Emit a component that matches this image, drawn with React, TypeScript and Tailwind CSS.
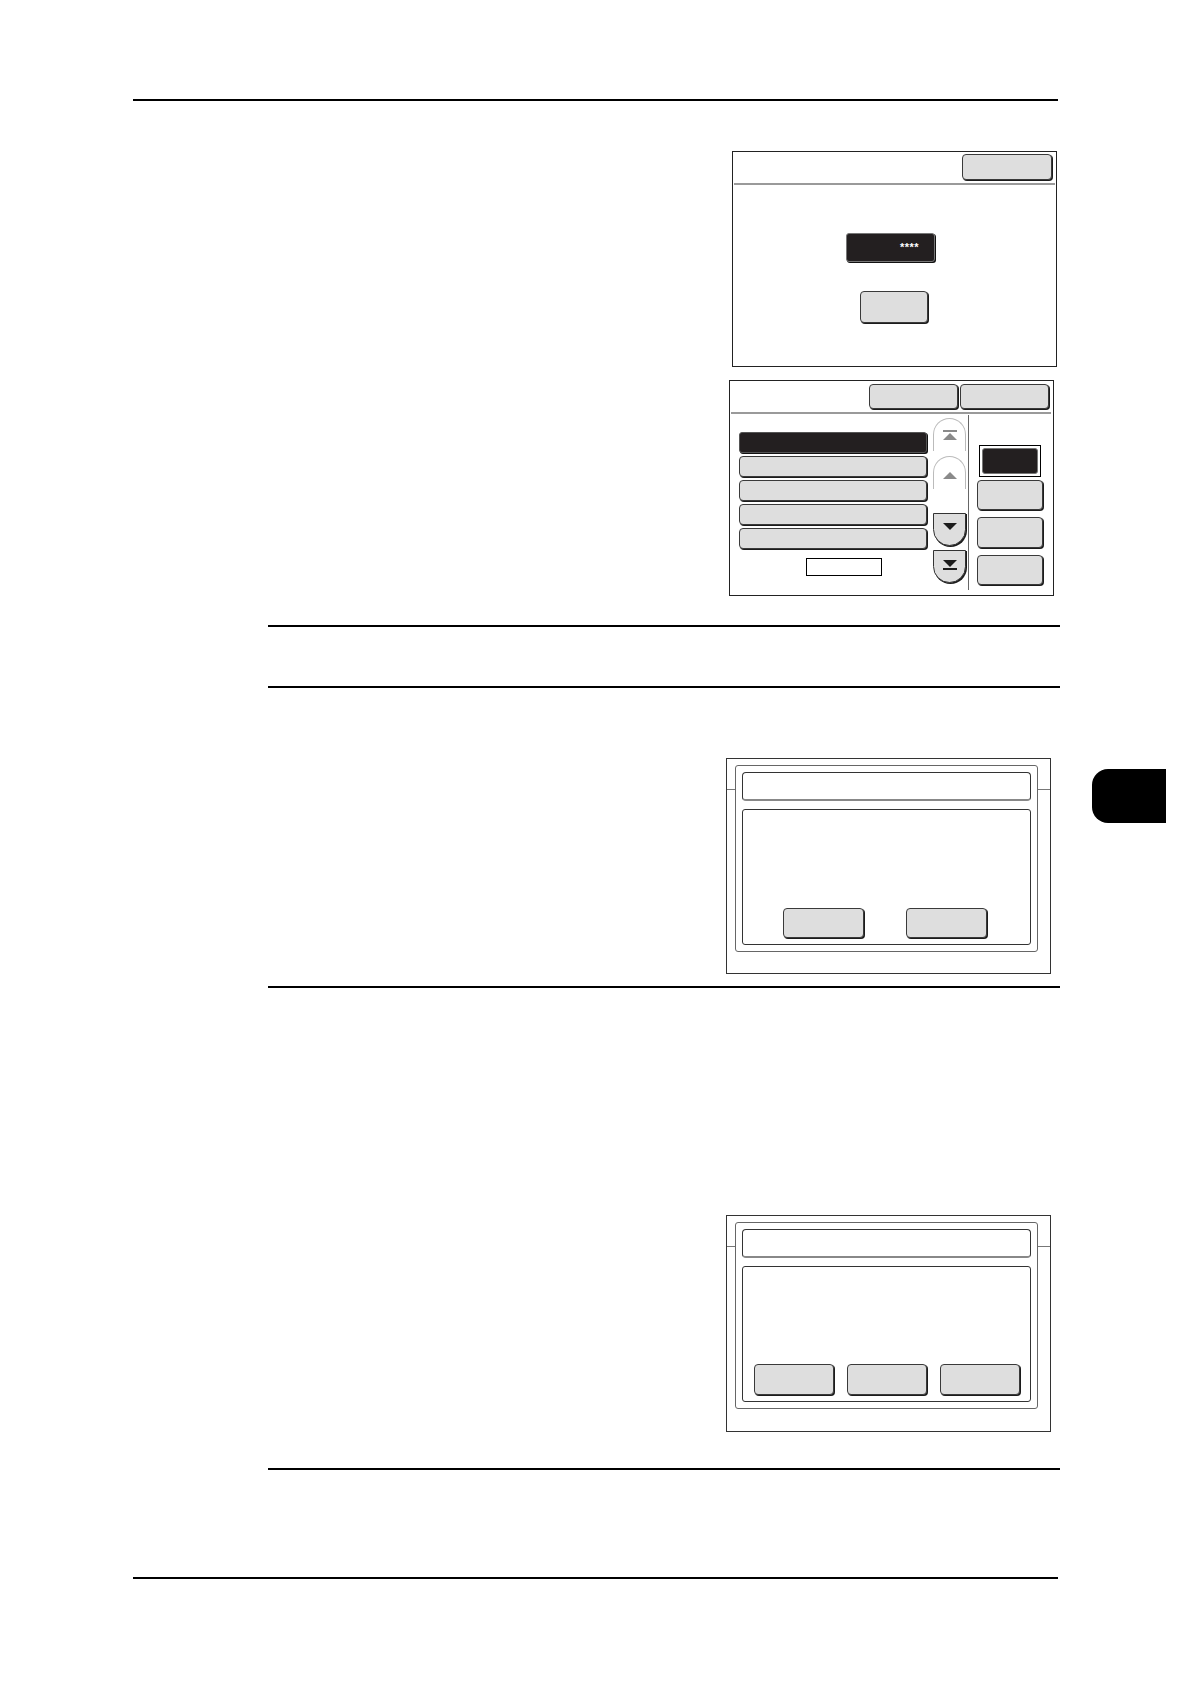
import React from "react";

// shared looks for the touch-panel style keys
const KEY = "rounded-[4px] border border-[#3a3a3a] bg-[#dedede] shadow-[1px_1px_0_#1c1c1c]";
const DARK_KEY = "rounded-[3px] border border-[#555] bg-[#231f20] shadow-[1px_1px_0_#111]";

const Rule = ({ left, width, mt }: { left: string; width: string; mt: string }) => (
  <div className={`${left} ${width} ${mt} h-[2px] shrink-0 bg-black`} />
);

function UpArrow({ stop }: { stop?: boolean }) {
  return (
    <svg width="16" height="12" viewBox="0 0 16 12">
      {stop && <rect x="1" y="0" width="14" height="2" fill="#8a8a8a" />}
      <polygon points="8,3 15,10 1,10" fill="#8a8a8a" />
    </svg>
  );
}

function DownArrow({ stop }: { stop?: boolean }) {
  return (
    <svg width="16" height="12" viewBox="0 0 16 12">
      <polygon points="1,1 15,1 8,8" fill="#1c1c1c" />
      {stop && <rect x="1" y="9" width="14" height="2" fill="#1c1c1c" />}
    </svg>
  );
}

function PasscodePanel() {
  return (
    <div className="ml-[732px] mt-[50px] h-[216px] w-[325px] shrink-0 border border-[#222] bg-white">
      <div className="flex h-[31px] justify-end pr-[4px] pt-[2px]">
        <div className={`${KEY} h-[26px] w-[90px]`} />
      </div>
      <div className="mx-px h-[2px] bg-[#9a9a9a]" />
      <div className="ml-[113px] mt-[48px] flex h-[29px] w-[89px] items-center justify-end rounded-[3px] border border-[#777] bg-[#231f20] pr-[15px] shadow-[1px_1px_0_#111]">
        <span className="font-['Liberation_Sans',Arial,sans-serif] text-[11px] font-bold leading-none tracking-[0.5px] text-white">
          ****
        </span>
      </div>
      <div className={`${KEY} ml-[127px] mt-[29px] h-[32px] w-[68px]`} />
    </div>
  );
}

function ListPanel() {
  return (
    <div className="ml-[729px] mt-[13px] h-[216px] w-[325px] shrink-0 border border-[#222] bg-white">
      <div className="flex h-[31px] justify-end gap-[2px] pr-[4px] pt-[3px]">
        <div className={`${KEY} h-[25px] w-[89px]`} />
        <div className={`${KEY} h-[25px] w-[89px]`} />
      </div>
      <div className="ml-px mr-[2px] h-[2px] bg-[#9a9a9a]" />
      <div className="flex h-[180px]">
        {/* list */}
        <div className="ml-[9px] flex w-[188px] flex-col pt-[18px]">
          <div className={`${DARK_KEY} h-[21px]`} />
          {[0, 1, 2, 3].map((i) => (
            <div key={i} className={`${KEY} mt-[3px] h-[21px]`} />
          ))}
          <div className="ml-[67px] mt-[9px] h-[18px] w-[76px] border border-black bg-white" />
        </div>
        {/* scroll keys */}
        <div className="ml-[6px] flex w-[33px] flex-col pt-[4px]">
          <div className="flex h-[33px] items-center justify-center rounded-t-full border-x border-t border-[#bbb] bg-white pt-[2px]">
            <UpArrow stop />
          </div>
          <div className="mt-[5px] flex h-[33px] items-center justify-center rounded-t-full border-x border-t border-[#bbb] bg-white pt-[3px]">
            <UpArrow />
          </div>
          <div className="mt-[24px] flex h-[33px] items-center justify-center rounded-b-full border border-[#333] bg-[#dedede] pb-[3px] shadow-[1px_1px_0_#1c1c1c]">
            <DownArrow />
          </div>
          <div className="mt-[4px] flex h-[33px] items-center justify-center rounded-b-full border border-[#333] bg-[#dedede] pb-[3px] shadow-[1px_1px_0_#1c1c1c]">
            <DownArrow stop />
          </div>
        </div>
        <div className="ml-[2px] mt-px h-[175px] w-px bg-[#666]" />
        {/* right keys */}
        <div className="flex flex-col">
          <div className="ml-[10px] mt-[31px] h-[32px] w-[62px] border border-black p-[2px]">
            <div className="h-full w-full rounded-[3px] border border-[#777] bg-[#231f20]" />
          </div>
          <div className={`${KEY} ml-[8px] mt-[3px] h-[30px] w-[66px]`} />
          <div className={`${KEY} ml-[8px] mt-[7px] h-[31px] w-[66px]`} />
          <div className={`${KEY} ml-[8px] mt-[7px] h-[30px] w-[66px]`} />
        </div>
      </div>
    </div>
  );
}

function DialogPanel({ mt, h, keys }: { mt: string; h: string; keys: number }) {
  const three = keys === 3;
  return (
    <div className={`ml-[726px] ${mt} ${h} w-[325px] shrink-0 border border-[#333] bg-white`}>
      <div className="flex items-start pt-[6px]">
        <div className="mt-[24px] h-px w-[8px] bg-[#777]" />
        <div className="w-[303px] rounded-[3px] border border-[#666] p-[6px]">
          <div className="h-[29px] rounded-[4px] border border-[#333] border-b-[#888] border-b-2 bg-white" />
          <div
            className={`mt-[8px] flex h-[136px] rounded-[3px] border border-[#333] bg-white ${
              three ? "gap-[13px] pl-[11px] pt-[97px]" : "gap-[42px] pl-[40px] pt-[98px]"
            }`}
          >
            {Array.from({ length: keys }).map((_, i) => (
              <div key={i} className={`${KEY} ${three ? "h-[31px] w-[80px]" : "h-[30px] w-[81px]"}`} />
            ))}
          </div>
        </div>
        <div className="mt-[24px] h-px w-[12px] bg-[#777]" />
      </div>
    </div>
  );
}

export default function App() {
  return (
    <div className="relative flex h-[1684px] w-[1190px] flex-col bg-white">
      <Rule left="ml-[133px]" width="w-[925px]" mt="mt-[99px]" />

      <PasscodePanel />
      <ListPanel />

      <Rule left="ml-[268px]" width="w-[792px]" mt="mt-[29px]" />
      <Rule left="ml-[268px]" width="w-[792px]" mt="mt-[59px]" />

      <DialogPanel mt="mt-[70px]" h="h-[216px]" keys={2} />

      <Rule left="ml-[268px]" width="w-[792px]" mt="mt-[12px]" />

      <DialogPanel mt="mt-[227px]" h="h-[217px]" keys={3} />

      <Rule left="ml-[268px]" width="w-[792px]" mt="mt-[36px]" />
      <Rule left="ml-[133px]" width="w-[925px]" mt="mt-[107px]" />

      {/* chapter tab on the page edge */}
      <div className="absolute left-[1092px] top-[769px] h-[54px] w-[74px] rounded-l-[16px] bg-black" />
    </div>
  );
}
